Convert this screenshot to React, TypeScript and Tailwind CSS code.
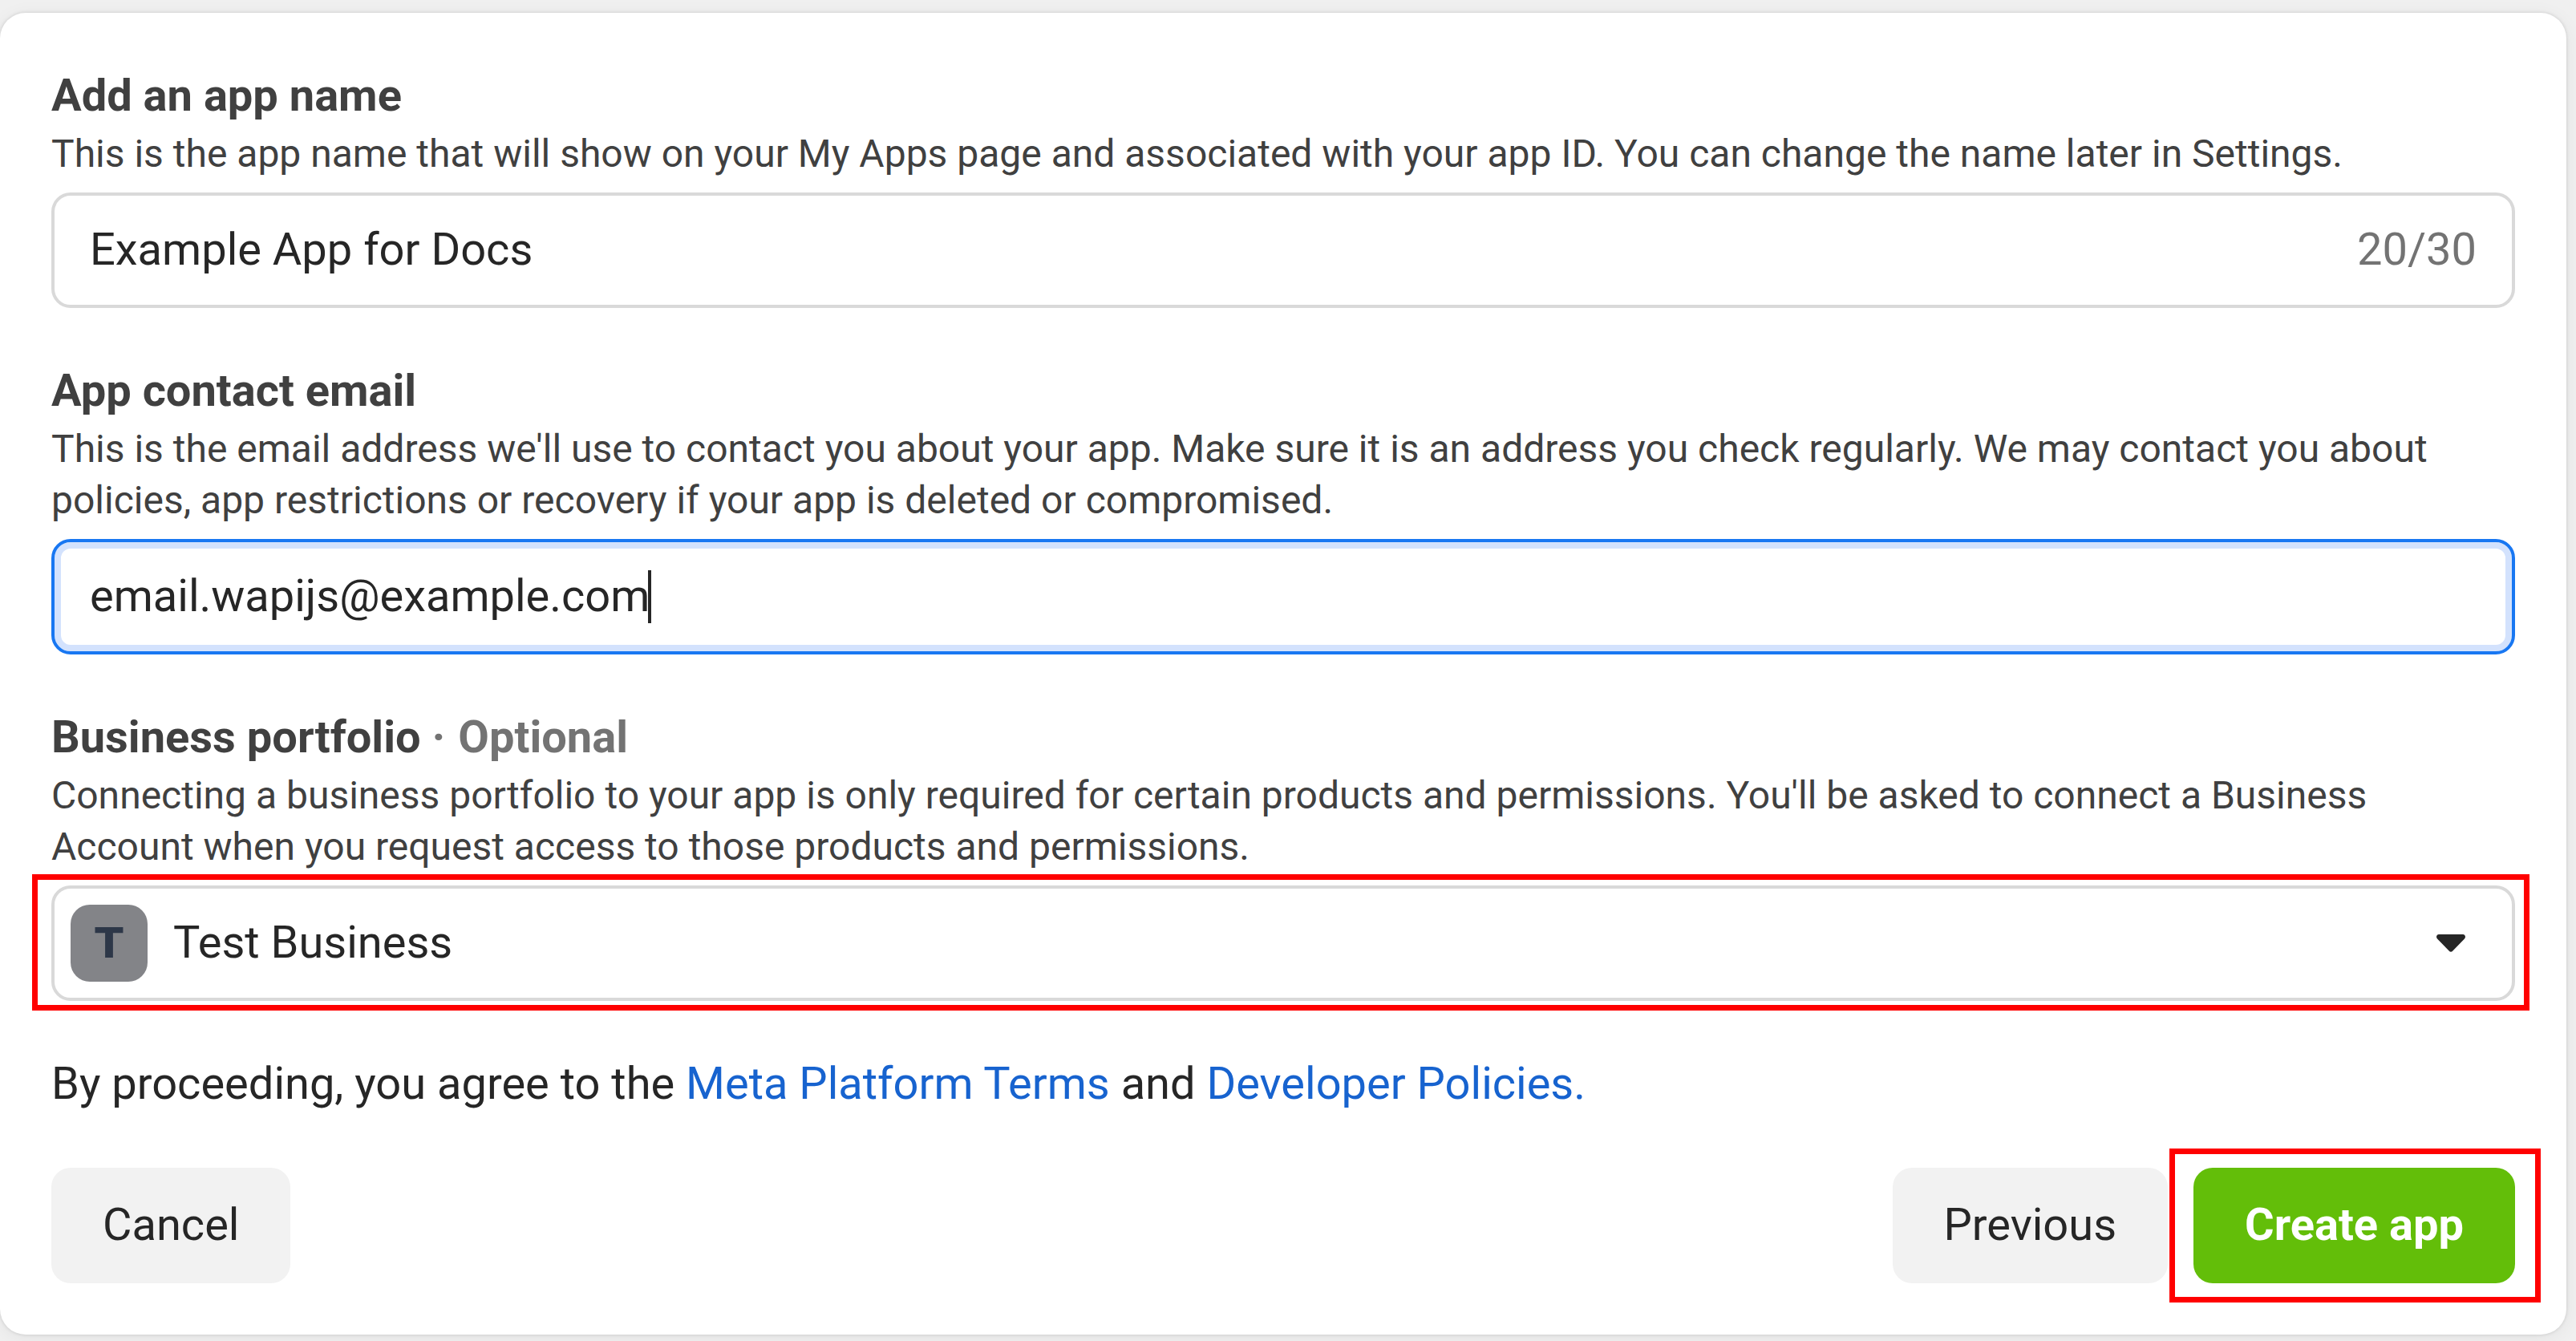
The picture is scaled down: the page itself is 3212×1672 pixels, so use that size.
import { useState, type ReactNode } from "react";

const fieldBox =
  "flex h-36 w-full items-center rounded-3xl border-4 bg-white text-[56px] leading-[76px] text-[#262626]";
const button =
  "h-36 rounded-3xl px-16 pb-0.5 text-[56px] leading-[76px] whitespace-nowrap";

function Field({
  id,
  label,
  note,
  description,
  children,
}: {
  id: string;
  label: string;
  note?: string;
  description: string;
  children: ReactNode;
}) {
  return (
    <div>
      <label
        htmlFor={id}
        className="block text-[56px] leading-[78px] font-bold text-[#404040]"
      >
        {label}
        {note && (
          <span className="text-[#737373]">
            {" "}
            <span className="mr-0.5">·</span> {note}
          </span>
        )}
      </label>
      <p
        id={`${id}-description`}
        className="mt-0.5 mb-4 text-5xl leading-16 text-[#404040]"
      >
        {description}
      </p>
      {children}
    </div>
  );
}

export default function App() {
  const [name, setName] = useState("Example App for Docs");
  const [email, setEmail] = useState("email.wapijs@example.com");

  return (
    <div className="min-h-screen bg-[#f0f0f0] pt-4 pr-3 pb-2 font-[Roboto,sans-serif]">
      <form className="flex flex-col gap-16 rounded-4xl bg-white p-16 shadow-[0_0_4px_rgba(0,0,0,0.15),0_4px_24px_rgba(0,0,0,0.06)]">
        <Field
          id="app-name"
          label="Add an app name"
          description="This is the app name that will show on your My Apps page and associated with your app ID. You can change the name later in Settings."
        >
          <div className={`${fieldBox} border-[#d9d9d9] px-11`}>
            <input
              id="app-name"
              aria-describedby="app-name-description"
              className="min-w-0 flex-1 pb-0.5 outline-none"
              value={name}
              maxLength={30}
              onChange={(e) => setName(e.target.value)}
            />
            <span className="pb-0.5 text-[#737373]">{name.length}/30</span>
          </div>
        </Field>

        <Field
          id="email"
          label="App contact email"
          description="This is the email address we'll use to contact you about your app. Make sure it is an address you check regularly. We may contact you about policies, app restrictions or recovery if your app is deleted or compromised."
        >
          <div
            className={`${fieldBox} border-[#1877f2] px-11 shadow-[inset_0_0_0_8px_#d3e2fd]`}
          >
            <input
              id="email"
              type="text"
              inputMode="email"
              aria-describedby="email-description"
              className="-mr-0.5 field-sizing-content max-w-full pb-0.5 caret-transparent outline-none"
              value={email}
              onChange={(e) => setEmail(e.target.value)}
            />
            <span className="h-[66px] w-1 bg-[#262626]" />
          </div>
        </Field>

        <Field
          id="portfolio"
          label="Business portfolio"
          note="Optional"
          description="Connecting a business portfolio to your app is only required for certain products and permissions. You'll be asked to connect a Business Account when you request access to those products and permissions."
        >
          <div className="relative">
            <div className={`${fieldBox} gap-8 border-[#d9d9d9] pr-[58px] pl-5`}>
              <span className="flex size-24 items-center justify-center rounded-3xl bg-[#838488] font-['DejaVu_Sans',sans-serif] text-[52px] leading-none font-bold text-[#2d3748]">
                T
              </span>
              <select
                id="portfolio"
                aria-describedby="portfolio-description"
                className="min-w-0 flex-1 appearance-none pb-0.5 outline-none"
              >
                <option>Test Business</option>
              </select>
              <svg
                viewBox="0 0 36 22"
                className="h-[22px] w-9 fill-[#262626]"
                aria-hidden="true"
              >
                <path d="M3 0H33C35.8 0 37 3.4 35 5.4L20.4 20.6C19 22.2 17 22.2 15.6 20.6L1 5.4C-1 3.4.2 0 3 0Z" />
              </svg>
            </div>
            <div className="pointer-events-none absolute -top-3.5 -right-[18px] -bottom-3 -left-6 border-[7px] border-[#ff0000]" />
          </div>
        </Field>

        <p className="text-[56px] leading-[78px] pb-0.5 text-[#262626]">
          By proceeding, you agree to the{" "}
          <a href="#terms" className="text-[#1763cf]">
            Meta Platform Terms
          </a>{" "}
          and{" "}
          <a href="#policies" className="text-[#1763cf]">
            Developer Policies.
          </a>
        </p>

        <div className="flex gap-8">
          <button
            type="button"
            className={`${button} mr-auto bg-[#f2f2f2] text-[#262626]`}
          >
            Cancel
          </button>
          <button type="button" className={`${button} bg-[#f2f2f2] text-[#262626]`}>
            Previous
          </button>
          <div className="relative">
            <button
              type="button"
              className={`${button} bg-[#63be09] font-bold text-white`}
            >
              Create app
            </button>
            <div className="pointer-events-none absolute -inset-y-6 -right-8 -left-[30px] border-[7px] border-[#ff0000]" />
          </div>
        </div>
      </form>
    </div>
  );
}
